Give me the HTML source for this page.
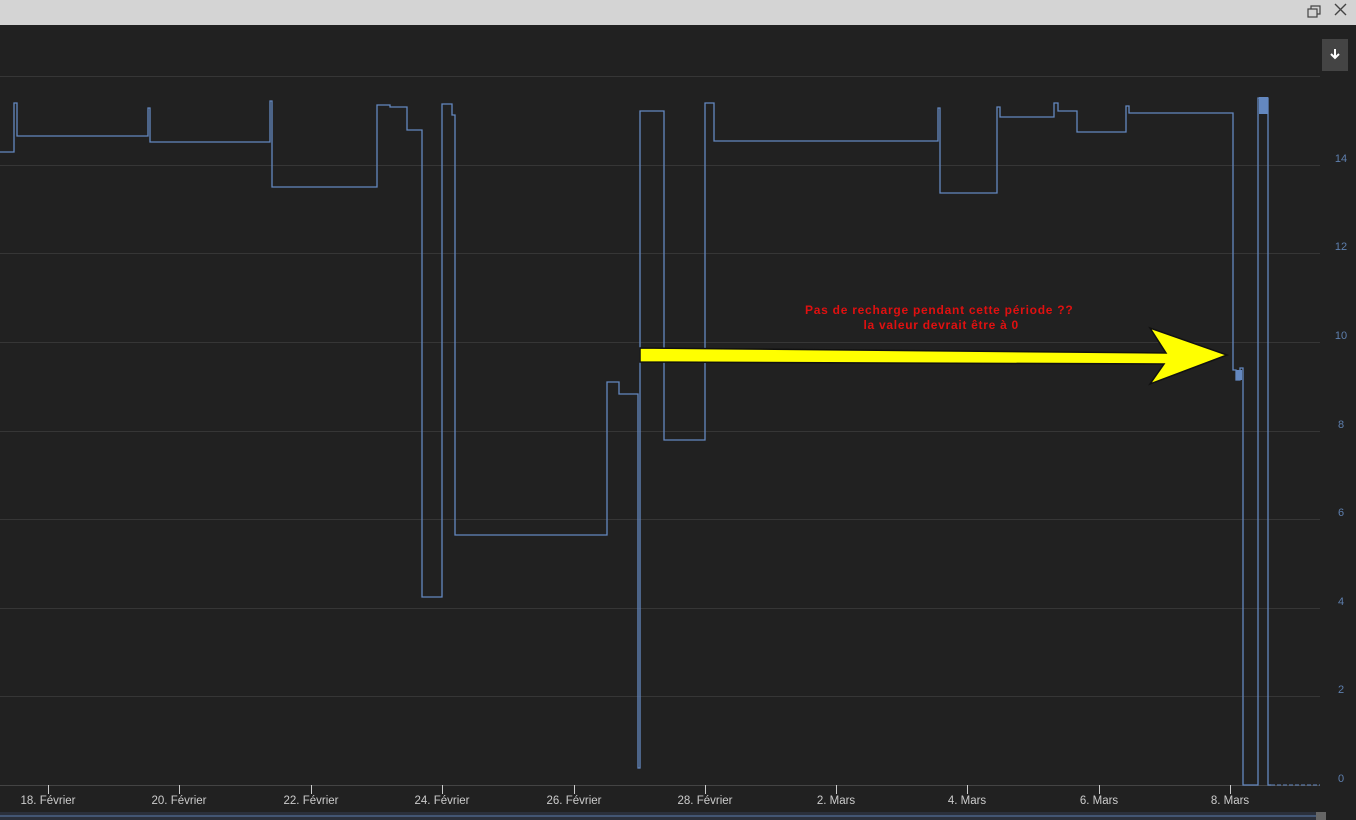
<!DOCTYPE html>
<html><head><meta charset="utf-8"><style>
html,body{margin:0;padding:0;width:1356px;height:820px;overflow:hidden;background:#212121;font-family:"Liberation Sans",sans-serif}
</style></head><body>
<svg width="1356" height="820" style="position:absolute;left:0;top:0">
<rect x="0" y="0" width="1356" height="25" fill="#d4d4d4"/>
<rect x="1308" y="9" width="9" height="8" fill="none" stroke="#444" stroke-width="1.2"/>
<path d="M1311 9V6h9v8h-3" fill="none" stroke="#444" stroke-width="1.2"/>
<path d="M1335 4l11 11M1346 4l-11 11" stroke="#444" stroke-width="1.4"/>
<rect x="1322" y="39" width="26" height="32" fill="#444"/>
<path d="M1335 49v9M1331 54l4 4 4-4" fill="none" stroke="#fff" stroke-width="2"/>
<g stroke="#363636" stroke-width="1">
<path d="M0 76.5H1320M0 165.5H1320M0 253.5H1320M0 342.5H1320M0 431.5H1320M0 519.5H1320M0 608.5H1320M0 696.5H1320"/>
</g>
<path d="M0 785.5H1320" stroke="#444"/>
<g stroke="#ccc"><path d="M48.5 785v9M179.5 785v9M311.5 785v9M442.5 785v9M574.5 785v9M705.5 785v9M836.5 785v9M967.5 785v9M1099.5 785v9M1230.5 785v9"/></g>
<g fill="#5e7fae" font-size="11" text-anchor="middle">
<text x="1341" y="162">14</text><text x="1341" y="250">12</text><text x="1341" y="339">10</text><text x="1341" y="428">8</text><text x="1341" y="516">6</text><text x="1341" y="605">4</text><text x="1341" y="693">2</text><text x="1341" y="782">0</text>
</g>
<g fill="#ccc" font-size="11.5" text-anchor="middle">
<text x="48" y="804">18. Février</text><text x="179" y="804">20. Février</text><text x="311" y="804">22. Février</text><text x="442" y="804">24. Février</text><text x="574" y="804">26. Février</text><text x="705" y="804">28. Février</text><text x="836" y="804">2. Mars</text><text x="967" y="804">4. Mars</text><text x="1099" y="804">6. Mars</text><text x="1230" y="804">8. Mars</text>
</g>
<path fill="none" stroke="#6488c0" stroke-width="1.3" d="M0 152H14V103H17V136H148V108H150V142H270V101H272V187H377V105H390V107H407V130H422V597H442V104H452V115H455V535H607V382H619V394H638V768H640V111H664V440H705V103H714V141H938V108H940V193H997V107H1000V117H1054V103H1058V111H1077V132H1126V106H1129V113H1233V370H1236V380H1240V368H1243V785H1258V98H1268V785H1271"/>
<path d="M1271 785H1320" stroke="#6488c0" stroke-dasharray="4 2"/>
<rect x="1259" y="97" width="9" height="17" fill="#6488c0"/>
<rect x="1236" y="370" width="6" height="10" fill="#6488c0"/>
<rect x="0" y="812" width="1322" height="8" fill="#2b303b"/>
<path d="M0 816H1320" stroke="#5b7cae" stroke-width="1"/>
<rect x="1316" y="812" width="10" height="8" fill="#666"/>
<polygon points="640,348 1166,353 1150,328 1227,355 1150,384 1164,364 640,362" fill="#ffff00" stroke="#111" stroke-width="1.5"/>
<g fill="#e01010" font-size="12" font-weight="bold" text-anchor="middle" letter-spacing="0.3">
<text x="939" y="314" textLength="268">Pas de recharge pendant cette période ??</text>
<text x="941" y="329" textLength="155">la valeur devrait être à 0</text>
</g>
</svg>
</body></html>
